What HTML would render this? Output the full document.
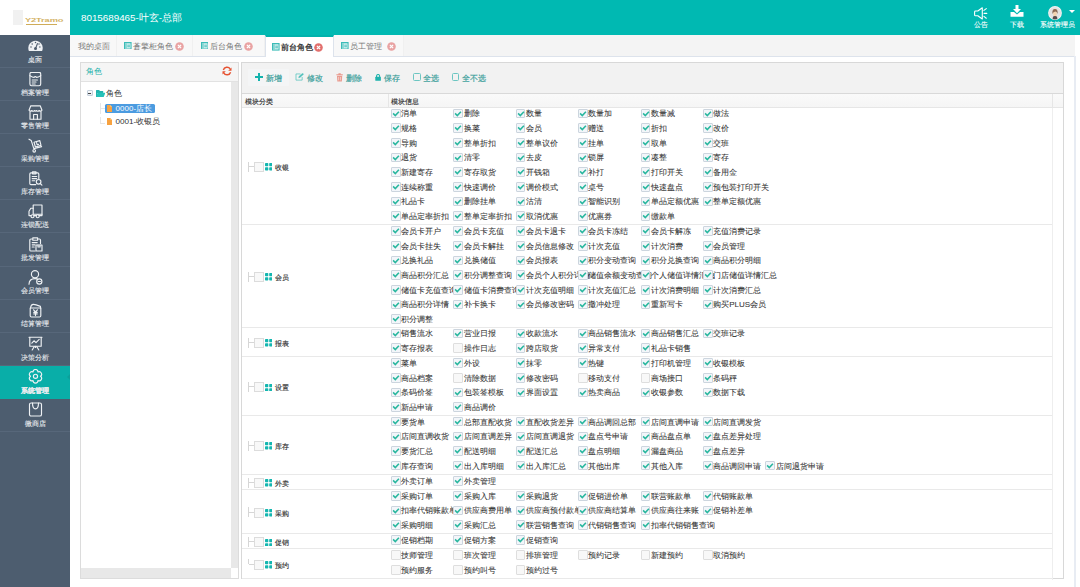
<!DOCTYPE html>
<html><head><meta charset="utf-8"><style>
*{margin:0;padding:0;box-sizing:border-box}
html,body{width:1080px;height:587px;overflow:hidden;background:#fff;font-family:"Liberation Sans",sans-serif;color:#333}
.abs{position:absolute}
#logo{position:absolute;left:0;top:0;width:70px;height:35px;background:#fff}
#hdr{position:absolute;left:70px;top:0;width:1010px;height:35px;background:#00b9b2;color:#fff}
#hdr .ttl{position:absolute;left:11px;top:12.2px;font-size:9.8px;line-height:12px;white-space:nowrap}
.hi{position:absolute;top:0;text-align:center;font-size:7.3px;line-height:8px;color:#fff;white-space:nowrap;-webkit-text-stroke:.1px #fff}
#side{position:absolute;left:0;top:35px;width:70px;height:552px;background:#4d5d6f}
.si{position:absolute;left:0;width:70px;height:33.08px;border-bottom:1px solid #57677a;color:#e6e9ed;text-align:center}
.si.act{background:#09aea8;color:#fff;border-bottom-color:#09aea8}
.si.act::after{content:"";position:absolute;right:0;top:8.5px;border:3.3px solid transparent;border-right:3.5px solid #0c9f9a;border-left:0}
.si .ic{position:absolute;left:0;top:3.5px;width:70px;height:15px;display:flex;justify-content:center}
.si .st{position:absolute;left:0;top:20.8px;width:70px;font-size:7.2px;line-height:8px;white-space:nowrap;-webkit-text-stroke:.12px #e6e9ed}
.si.act .st{font-weight:bold}
#tabs{position:absolute;left:70px;top:35px;width:1005px;height:22px;background:#f4f4f4;border-bottom:1px solid #dde3ec}
.tab{position:absolute;top:0;height:21px;background:#f8f8f8;border-right:1px solid #f0f0f0;font-size:7.7px;line-height:9px;color:#777;white-space:nowrap}
.tab span{position:absolute;top:6.5px}
.tab .ti{position:absolute;top:6.5px}
.tab .tc{position:absolute;top:6.6px}
.tab.act{background:#fff;border-top:2px solid #00b2ac;color:#333;-webkit-text-stroke:.3px #333;height:22px;border-left:1px solid #dde3ec;border-right:1px solid #dde3ec}
#frame{position:absolute;left:70px;top:56px;width:1006px;height:540px;border-right:2px solid #e8ecf3}
#lp{position:absolute;left:80px;top:62px;width:158.5px;height:516.5px;border:1px solid #dcdcdc;border-left-width:1.5px;background:#fff}
#lp .ph{position:absolute;left:0;top:0;width:100%;height:19px;background:#f5f5f5;border-bottom:1px solid #e2e2e2}
#lp .pt{position:absolute;left:5.3px;top:4.3px;font-size:7.6px;line-height:9px;color:#1ab0aa}
#rg{position:absolute;left:240.7px;top:62.3px;width:822.9px;height:517.1px;border:1px solid #d8d8d8;background:#fff}
#tb{position:absolute;left:0;top:0;width:100%;height:30.6px;background:#f2f2f2;border-bottom:1px solid #d9d9d9}
.btn{position:absolute;top:10.5px;font-size:7.9px;line-height:9px;color:#3c9f9b;white-space:nowrap;-webkit-text-stroke:.2px #3c9f9b}
#gh{position:absolute;left:0;top:30.6px;width:100%;height:13.8px;background:linear-gradient(#fafafa,#f5f5f5);border-bottom:1px solid #e6e6e6;font-size:7.2px;line-height:9px;color:#333;-webkit-text-stroke:.15px #333}
#gh span{position:absolute;top:3.4px}
.vline{position:absolute;width:1px;background:#ececec}
.grow{position:absolute;left:0;width:810.7px;border-bottom:1px solid #e9e9e9}
.it{position:absolute;height:11px;white-space:nowrap;font-size:8px;line-height:10px;color:#333}
.it span{position:absolute;left:10.2px;top:.7px;-webkit-text-stroke:.06px #333}
.cb,.cb.un{position:absolute;left:0;top:0;width:9.5px;height:9.6px;border:1px solid #ccd5de;background:#f3f6fa;z-index:2;border-radius:1px}
.cb.un{border-color:#dedede;background:#f8f8f8}
.cb svg{position:absolute;left:-1px;top:-1px}
.gl{position:absolute;left:0;height:11px;width:140px}
.gl .tl{position:absolute;left:6.4px;top:-.5px;width:6px;height:10px;border-left:1px solid #d6d6d6}
.gl .tl.last{height:5px}
.gl .tl::after{content:"";position:absolute;left:0;top:4.5px;width:6px;border-top:1px solid #d6d6d6}
.gl .gcb{position:absolute;left:12.6px;top:0;width:9.8px;height:9.8px;border:1px solid #dcdcdc;background:#f8f8f8}
.gl .gi{position:absolute;left:23px;top:1.3px;width:7.5px;height:7.5px}
.gl .gi u{position:absolute;width:3.3px;height:3.3px;background:#14b6b0;border-radius:.8px}
.gl .gi u:nth-child(1){left:0;top:0}.gl .gi u:nth-child(2){left:4.1px;top:0}.gl .gi u:nth-child(3){left:0;top:4.1px}.gl .gi u:nth-child(4){left:4.1px;top:4.1px}
.gl span{position:absolute;left:33px;top:.8px;font-size:7.2px;line-height:9px;color:#333;-webkit-text-stroke:.15px #333}
</style></head><body>
<div id="logo"><div class="abs" style="left:13px;top:10.4px;width:10px;height:14.6px;background:#f1f1f1"></div>
<div class="abs" style="left:25.3px;top:17.3px;font-size:7.6px;line-height:7px;color:#d3b163;font-weight:bold;letter-spacing:-.1px;transform:scale(1.22,.78);transform-origin:0 50%">Y2Tramo</div>
<div class="abs" style="left:26px;top:24px;width:31px;height:1.4px;background:#cfac58"></div></div>
<div id="hdr"><div class="ttl">8015689465-叶玄-总部</div>
<div class="hi" style="left:897px;width:28px"><svg width="14" height="13" viewBox="0 0 14 13" style="position:absolute;left:7px;top:7px;overflow:visible" fill="none" stroke="#fff" stroke-width="1.1" stroke-linecap="round"><path d="M1.5 4 H3.8 L8.3 0.8 V12 L3.8 8.8 H1.5 Q0.6 8.8 0.6 7.9 V4.9 Q0.6 4 1.5 4Z" stroke-linejoin="round"/><path d="M9.9 3.4 L12.3 1.6 M10.1 6.4 H12.8 M9.9 9.4 L12.3 11.2"/></svg><div style="position:absolute;left:0;top:20.5px;width:28px">公告</div></div>
<div class="hi" style="left:932px;width:30px"><svg width="14" height="12" viewBox="0 0 14 12" style="position:absolute;left:8px;top:5px"><path d="M5.5 0 H8.5 V4 H11 L7 8.2 L3 4 H5.5 Z" fill="#fff"/><path d="M0.5 7 H4 L7 9.5 L10 7 H13.5 V11.7 H0.5 Z" fill="#fff"/></svg><div style="position:absolute;left:0;top:20.5px;width:30px">下载</div></div>
<div class="hi" style="left:968px;width:38px"><svg width="14" height="14" viewBox="0 0 14 14" style="position:absolute;left:9.9px;top:6px"><circle cx="7" cy="7" r="6.9" fill="#f4f4f4"/><circle cx="7" cy="7" r="6" fill="#e4e2e2"/><path d="M4.6 13 Q4.8 9.8 7 9.8 Q9.2 9.8 9.4 13 Q7 13.8 4.6 13Z" fill="#5a4a4a"/><ellipse cx="7" cy="7.9" rx="1.9" ry="2.4" fill="#f3d2ae"/><path d="M4.4 8 Q3.9 3 7 3.1 Q10.1 3 9.6 8 Q9 5.6 7.4 5.5 Q5.2 5.6 4.4 8Z" fill="#8d6a52"/></svg>
<svg width="6" height="4" viewBox="0 0 6 4" style="position:absolute;left:31px;top:10.3px"><path d="M0 0 H6 L3 3Z" fill="#fff"/></svg><div style="position:absolute;left:0;top:20.5px;width:38px">系统管理员</div></div>
</div>
<div id="side">
<div class="si" style="top:0px"><div class="ic"><svg width="15" height="11" viewBox="0 0 15 11" style="margin-top:1.3px"><path d="M0.9 10.9 A7.2 7.2 0 1 1 14.1 10.9 Z" fill="#eef1f4"/><circle cx="7.5" cy="8.6" r="1.5" fill="#4c5b6c"/><path d="M7.5 8.6 L9.6 3.2" stroke="#4c5b6c" stroke-width="1.1"/><circle cx="3" cy="7" r=".75" fill="#4c5b6c"/><circle cx="4.2" cy="4" r=".75" fill="#4c5b6c"/><circle cx="7.5" cy="2.4" r=".75" fill="#4c5b6c"/><circle cx="11.9" cy="7" r=".75" fill="#4c5b6c"/><circle cx="11" cy="4" r=".75" fill="#4c5b6c"/></svg></div><div class="st">桌面</div></div>
<div class="si" style="top:33.08px"><div class="ic"><svg width="15" height="15" viewBox="0 0 15 15" fill="none" stroke="#eef1f4" stroke-width="1.15" stroke-linejoin="round" stroke-linecap="round"><rect x="1.9" y="0.3" width="10.8" height="13.4" rx="1.6"/><path d="M1.9 3.6 Q4.5 5.4 6 5.4 Q7.3 3.9 8.6 5.4 Q10.1 5.4 12.7 3.6"/><path d="M4.2 8h5.2M4.2 10h3.8M4.2 12h3"/></svg></div><div class="st">档案管理</div></div>
<div class="si" style="top:66.16px"><div class="ic"><svg width="15" height="15" viewBox="0 0 15 15" fill="none" stroke="#eef1f4" stroke-width="1.15" stroke-linejoin="round" stroke-linecap="round"><path d="M1 5.2 L2.8 0.8 H12.2 L14 5.2 Q12.7 7 11.2 5.5 Q9.8 7 8.3 5.5 Q7.5 7 6.7 5.5 Q5.2 7 3.8 5.5 Q2.3 7 1 5.2Z"/><path d="M2 6.5 V14.2 H13 V6.5"/><path d="M5.6 14.2 V9.5 H9.4 V14.2"/></svg></div><div class="st">零售管理</div></div>
<div class="si" style="top:99.24px"><div class="ic"><svg width="15" height="15" viewBox="0 0 15 15" fill="none" stroke="#eef1f4" stroke-width="1.15" stroke-linejoin="round" stroke-linecap="round"><path d="M1 1.2 L3.2 2.4 L5.8 10.6 L13.6 8.6"/><path d="M6 4.2 L11.8 2.6 L13 7.4 L7.4 9 Z"/><path d="M8.6 4.6 L9.2 6.8 L10.6 6.4"/><circle cx="6.2" cy="12.8" r="1.3"/></svg></div><div class="st">采购管理</div></div>
<div class="si" style="top:132.32px"><div class="ic"><svg width="15" height="15" viewBox="0 0 15 15" fill="none" stroke="#eef1f4" stroke-width="1.15" stroke-linejoin="round" stroke-linecap="round"><path d="M10.8 7.5 V3 Q10.8 1.8 9.6 1.8 H3 Q1.8 1.8 1.8 3 V12.4 Q1.8 13.6 3 13.6 H7.8"/><path d="M4.5 0.8 H8 V2.8 H4.5Z"/><path d="M4.2 5.5h4.5M4.2 7.6h4.5M4.2 9.7h2.5"/><circle cx="10.6" cy="10.8" r="2.3"/><path d="M12.3 12.5 L13.9 14.1"/></svg></div><div class="st">库存管理</div></div>
<div class="si" style="top:165.4px"><div class="ic"><svg width="15" height="15" viewBox="0 0 15 15" fill="none" stroke="#eef1f4" stroke-width="1.15" stroke-linejoin="round" stroke-linecap="round"><path d="M5.2 1 H14 V10.2 H5.2 Z"/><path d="M5.2 4.2 H2.8 L1 7.2 V11.6 H3"/><path d="M6 11.6 H8.3 M11.1 11.6 H14 V10.2"/><circle cx="4.5" cy="12.2" r="1.5"/><circle cx="9.7" cy="12.2" r="1.5"/></svg></div><div class="st">连锁配送</div></div>
<div class="si" style="top:198.48px"><div class="ic"><svg width="15" height="15" viewBox="0 0 15 15" fill="none" stroke="#eef1f4" stroke-width="1.15" stroke-linejoin="round" stroke-linecap="round"><path d="M4.2 2 H2.9 Q1.8 2 1.8 3.1 V12.9 Q1.8 14 2.9 14 H7"/><path d="M10.2 2 H11.4 Q12.5 2 12.5 3.1 V6.5"/><path d="M4.8 0.8 H9.6 V3.2 H4.8Z"/><path d="M4.2 5.6h5M4.2 7.8h2.8M4.2 10h2"/><rect x="8" y="8" width="6" height="6"/><path d="M10 8 V10 H12 V8"/></svg></div><div class="st">批发管理</div></div>
<div class="si" style="top:231.56px"><div class="ic"><svg width="15" height="15" viewBox="0 0 15 15" fill="none" stroke="#eef1f4" stroke-width="1.15" stroke-linejoin="round" stroke-linecap="round"><circle cx="7" cy="4.2" r="3.6"/><path d="M1 14.2 Q1.2 8.6 7 8.6 Q8.4 8.6 9.2 8.9"/><circle cx="11.3" cy="11.5" r="2.6"/><path d="M10.2 11.5h2.2"/></svg></div><div class="st">会员管理</div></div>
<div class="si" style="top:264.64px"><div class="ic"><svg width="15" height="15" viewBox="0 0 15 15" fill="none" stroke="#eef1f4" stroke-width="1.15" stroke-linejoin="round" stroke-linecap="round"><path d="M2.2 5 H12.8 V12.8 Q12.8 14 11.6 14 H3.4 Q2.2 14 2.2 12.8 Z"/><path d="M2.6 4.8 Q3 1.2 5.5 1.4 Q7.5 1.6 12.4 3.4 L12.6 5"/><path d="M5.6 6.8 L7.5 9 L9.4 6.8 M5.8 9.4 H9.2 M5.8 10.9 H9.2 M7.5 9 V12.6"/></svg></div><div class="st">结算管理</div></div>
<div class="si" style="top:297.72px"><div class="ic"><svg width="15" height="15" viewBox="0 0 15 15" fill="none" stroke="#eef1f4" stroke-width="1.15" stroke-linejoin="round" stroke-linecap="round"><path d="M1 1.2 H14 M1.8 1.2 V10.2 H13.2 V1.2"/><path d="M3.8 7.2 L6 4.8 L8 6.6 L11.2 3.4"/><path d="M7.5 10.2 V11.5 M4.2 14 L6.2 10.6 M10.8 14 L8.8 10.6"/></svg></div><div class="st">决策分析</div></div>
<div class="si act" style="top:330.8px"><div class="ic"><svg width="15" height="15" viewBox="0 0 15 15" fill="none" stroke="#eef1f4" stroke-width="1.15" stroke-linejoin="round" stroke-linecap="round"><path d="M5.00 2.98 A2.50 2.50 0 0 1 10.00 2.98 A2.50 2.50 0 0 1 12.49 7.30 A2.50 2.50 0 0 1 10.00 11.62 A2.50 2.50 0 0 1 5.00 11.62 A2.50 2.50 0 0 1 2.51 7.30 A2.50 2.50 0 0 1 5.00 2.98 Z"/><circle cx="7.5" cy="7.3" r="2.1"/></svg></div><div class="st">系统管理</div></div>
<div class="si" style="top:363.88px"><div class="ic"><svg width="15" height="15" viewBox="0 0 15 15" fill="none" stroke="#eef1f4" stroke-width="1.15" stroke-linejoin="round" stroke-linecap="round"><rect x="1.5" y="1" width="12" height="13" rx="1.6"/><path d="M4.5 1 Q4.5 6.8 7.5 6.8 Q10.5 6.8 10.5 1"/></svg></div><div class="st">微商店</div></div>
</div>
<div id="tabs">
<div class="tab" style="left:0;width:46.7px"><span style="left:8.3px">我的桌面</span></div>
<div class="tab" style="left:46.7px;width:76.6px"><svg class="ti" style="left:7.3px" width="7.6" height="7.6" viewBox="0 0 7 7"><rect x="0" y="0" width="7" height="7" fill="#3cbcb8"/><rect x="1" y="1.2" width="5" height="4.8" fill="#dff4f3"/><rect x="1" y="1.2" width="1.6" height="4.8" fill="#7dd3d0"/><rect x="3" y="2.5" width="2.5" height=".8" fill="#3cbcb8"/><rect x="3" y="4" width="2.5" height=".8" fill="#3cbcb8"/></svg><span style="left:16.5px">蒼擎柜角色</span><svg class="tc" style="left:58.8px" width="9" height="9" viewBox="0 0 9 9"><circle cx="4.5" cy="4.5" r="4.3" fill="#e9a3a3"/><path d="M2.9 2.9 L6.1 6.1 M6.1 2.9 L2.9 6.1" stroke="#fff" stroke-width="1.3"/></svg></div>
<div class="tab" style="left:123.3px;width:71.4px"><svg class="ti" style="left:7.3px" width="7.6" height="7.6" viewBox="0 0 7 7"><rect x="0" y="0" width="7" height="7" fill="#3cbcb8"/><rect x="1" y="1.2" width="5" height="4.8" fill="#dff4f3"/><rect x="1" y="1.2" width="1.6" height="4.8" fill="#7dd3d0"/><rect x="3" y="2.5" width="2.5" height=".8" fill="#3cbcb8"/><rect x="3" y="4" width="2.5" height=".8" fill="#3cbcb8"/></svg><span style="left:16.5px">后台角色</span><svg class="tc" style="left:51px" width="9" height="9" viewBox="0 0 9 9"><circle cx="4.5" cy="4.5" r="4.3" fill="#e9a3a3"/><path d="M2.9 2.9 L6.1 6.1 M6.1 2.9 L2.9 6.1" stroke="#fff" stroke-width="1.3"/></svg></div>
<div class="tab act" style="left:194.7px;width:69.5px"><svg class="ti" style="left:6.8px;top:6.2px" width="7.6" height="7.6" viewBox="0 0 7 7"><rect width="7" height="7" fill="#3cbcb8"/><rect x="1" y="1.2" width="5" height="4.8" fill="#dff4f3"/><rect x="1" y="1.2" width="1.6" height="4.8" fill="#7dd3d0"/><rect x="3" y="2.5" width="2.5" height=".8" fill="#3cbcb8"/><rect x="3" y="4" width="2.5" height=".8" fill="#3cbcb8"/></svg><span style="left:15.7px;top:6px">前台角色</span><svg class="tc" style="left:48.3px;top:5.8px" width="9" height="9" viewBox="0 0 9 9"><circle cx="4.5" cy="4.5" r="4.3" fill="#e2706e"/><path d="M2.9 2.9 L6.1 6.1 M6.1 2.9 L2.9 6.1" stroke="#fff" stroke-width="1.3"/></svg></div>
<div class="tab" style="left:264.2px;width:69.8px"><svg class="ti" style="left:7px" width="7.6" height="7.6" viewBox="0 0 7 7"><rect x="0" y="0" width="7" height="7" fill="#3cbcb8"/><rect x="1" y="1.2" width="5" height="4.8" fill="#dff4f3"/><rect x="1" y="1.2" width="1.6" height="4.8" fill="#7dd3d0"/><rect x="3" y="2.5" width="2.5" height=".8" fill="#3cbcb8"/><rect x="3" y="4" width="2.5" height=".8" fill="#3cbcb8"/></svg><span style="left:16px">员工管理</span><svg class="tc" style="left:52.5px" width="9" height="9" viewBox="0 0 9 9"><circle cx="4.5" cy="4.5" r="4.3" fill="#e9a3a3"/><path d="M2.9 2.9 L6.1 6.1 M6.1 2.9 L2.9 6.1" stroke="#fff" stroke-width="1.3"/></svg></div>
</div>
<div id="frame"></div>
<div id="lp"><div class="ph"><div class="pt">角色</div>
<svg class="abs" style="left:140.8px;top:3px" width="10" height="10" viewBox="0 0 10 10" fill="none" stroke="#e65332" stroke-width="1.45"><path d="M1.35 3.95 A3.8 3.8 0 0 1 8.19 2.93"/><path d="M8.61 6.17 A3.8 3.8 0 0 1 1.71 6.9"/><path d="M9.5 1.5 V4.8 H6.2Z" fill="#e65332" stroke="none"/><path d="M0.5 8.6 V5.3 H3.8Z" fill="#e65332" stroke="none"/></svg></div>
<div class="abs" style="left:5.6px;top:27.3px;width:6.4px;height:5.8px;border:1px solid #c3cfdb;border-radius:1px;background:linear-gradient(#fbfcfd,#e6ebf0)"></div><div class="abs" style="left:7.1px;top:29.7px;width:3.4px;height:1px;background:#444"></div>
<svg class="abs" style="left:14.5px;top:27.3px" width="9.5" height="7.2" viewBox="0 0 9.5 7.2"><path d="M0 .6 Q0 0 .6 0 H3.2 L3.9 .9 H7.2 V3 H0Z" fill="#22b3ad"/><path d="M0 .8 H1.4 V7.2 H0Z" fill="#22b3ad"/><path d="M1.6 2.7 H9.5 L7.6 7.2 H0 Z" fill="#25c1b8"/></svg>
<div class="abs" style="left:24.8px;top:26px;font-size:8px;line-height:9px">角色</div>
<div class="abs" style="left:18.8px;top:39.5px;width:5px;height:11px;border-left:1px solid #e6e6e6"></div>
<div class="abs" style="left:18.8px;top:44.7px;width:5.5px;border-top:1px solid #e6e6e6"></div>
<div class="abs" style="left:18.8px;top:54.3px;width:5px;height:6px;border-left:1px solid #e6e6e6"></div>
<div class="abs" style="left:18.8px;top:59.5px;width:5.5px;border-top:1px solid #e6e6e6"></div>
<div class="abs" style="left:24.2px;top:40.5px;width:50.3px;height:9.3px;background:#4b9be0;border-radius:1.5px"></div>
<svg class="abs" style="left:26.3px;top:41.6px" width="5" height="7" viewBox="0 0 5 7"><path d="M0 0 H3.3 L5 1.7 V7 H0Z" fill="#f7a240"/><path d="M3.3 0 V1.7 H5" fill="#fbd29a"/></svg>
<div class="abs" style="left:34.6px;top:41px;font-size:7.9px;line-height:9px;color:#fff;letter-spacing:.1px">0000-店长</div>
<svg class="abs" style="left:26.3px;top:54.6px" width="5" height="7" viewBox="0 0 5 7"><path d="M0 0 H3.3 L5 1.7 V7 H0Z" fill="#f7a240"/><path d="M3.3 0 V1.7 H5" fill="#fbd29a"/></svg>
<div class="abs" style="left:34.6px;top:54px;font-size:8.1px;line-height:9px">0001-收银员</div>
<div class="abs" style="left:150.1px;top:19px;width:7px;height:486.3px;background:#e8e8e8"></div>
<div class="abs" style="left:0;top:505.3px;width:150.1px;height:9.5px;background:#e8e8e8"></div>
</div>
<div id="rg">
<div id="tb">
<div class="abs" style="left:6px;top:5.4px;width:41.3px;height:17.6px;background:#f4f5f6;border-radius:1px"></div>
<svg class="abs" style="left:13px;top:10.1px" width="8" height="8" viewBox="0 0 8 8"><path d="M3 0H5V3H8V5H5V8H3V5H0V3H3Z" fill="#13b3ad"/></svg>
<div class="btn" style="left:24.5px">新增</div>
<svg class="abs" style="left:53.4px;top:10.2px" width="9" height="7.6" viewBox="0 0 9 8" fill="none" stroke="#4cc0ba" stroke-width=".75"><path d="M5.5 1 H.8 V7.5 H7.3 V4.2"/><path d="M3.6 5 L3.9 3.6 L7.8 .2 L8.8 1.2 L5 4.7 Z" fill="#4cc0ba" stroke-width=".4"/></svg>
<div class="btn" style="left:65px">修改</div>
<svg class="abs" style="left:94.3px;top:9.8px" width="7.2" height="8.8" viewBox="0 0 7 9"><path d="M2.3 0.3 H4.7 V1.2 H6.8 V2.3 H.2 V1.2 H2.3Z" fill="#e99a8e"/><path d="M.8 2.8 H6.2 L5.8 8.8 H1.2Z" fill="#e99a8e"/><path d="M2.5 4 V7.5 M4.5 4 V7.5" stroke="#fff" stroke-width=".5"/></svg>
<div class="btn" style="left:104px">删除</div>
<svg class="abs" style="left:133.6px;top:10.8px" width="6.2" height="6.8" viewBox="0 0 7 8"><path d="M1.7 3.6 V2.4 A1.8 1.8 0 0 1 5.3 2.4 V3.6" fill="none" stroke="#1fb3ad" stroke-width="1.3"/><rect x=".2" y="3.3" width="6.6" height="4.7" rx=".6" fill="#1fb3ad"/></svg>
<div class="btn" style="left:142.5px">保存</div>
<div class="abs" style="left:171.7px;top:10.2px;width:7.3px;height:7.5px;border:1px solid #6cc6c2;border-radius:1.5px"></div>
<div class="btn" style="left:181px">全选</div>
<div class="abs" style="left:210px;top:10.2px;width:7.3px;height:7.5px;border:1px solid #6cc6c2;border-radius:1.5px"></div>
<div class="btn" style="left:220px">全不选</div>
</div>
<div id="gh"><span style="left:3px">模块分类</span><span style="left:149.7px">模块信息</span>
<div class="vline" style="left:146.7px;top:0;height:14px;background:#e6e6e6"></div>
<div class="vline" style="left:810.7px;top:0;height:14px;background:#e6e6e6"></div></div>
<div class="vline" style="left:810.7px;top:44.4px;height:472px;background:#eeeeee"></div>
<div class="grow" style="top:44.4px;height:117.6px"><div class="gl" style="top:54.5px"><b class="tl"></b><i class="gcb"></i><svg class="gi" width="7.5" height="7.5" viewBox="0 0 7.5 7.5"><rect x="0" y="0" width="3.3" height="3.3" rx=".7" fill="#14b6b0"/><rect x="4.2" y="0" width="3.3" height="3.3" rx=".7" fill="#14b6b0"/><rect x="0" y="4.2" width="3.3" height="3.3" rx=".7" fill="#14b6b0"/><rect x="4.2" y="4.2" width="3.3" height="3.3" rx=".7" fill="#14b6b0"/></svg><span>收银</span></div><div class="it" style="left:149.4px;top:1.1px"><span>消单</span><i class="cb"><svg width="9.5" height="9.6" viewBox="0 0 9.5 9.6"><path d="M2.1 4.4 L4.3 6.6 L7.9 2.7" fill="none" stroke="#2ab79f" stroke-width="1.55"/></svg></i></div><div class="it" style="left:211.8px;top:1.1px"><span>删除</span><i class="cb"><svg width="9.5" height="9.6" viewBox="0 0 9.5 9.6"><path d="M2.1 4.4 L4.3 6.6 L7.9 2.7" fill="none" stroke="#2ab79f" stroke-width="1.55"/></svg></i></div><div class="it" style="left:274.2px;top:1.1px"><span>数量</span><i class="cb"><svg width="9.5" height="9.6" viewBox="0 0 9.5 9.6"><path d="M2.1 4.4 L4.3 6.6 L7.9 2.7" fill="none" stroke="#2ab79f" stroke-width="1.55"/></svg></i></div><div class="it" style="left:336.6px;top:1.1px"><span>数量加</span><i class="cb"><svg width="9.5" height="9.6" viewBox="0 0 9.5 9.6"><path d="M2.1 4.4 L4.3 6.6 L7.9 2.7" fill="none" stroke="#2ab79f" stroke-width="1.55"/></svg></i></div><div class="it" style="left:399px;top:1.1px"><span>数量减</span><i class="cb"><svg width="9.5" height="9.6" viewBox="0 0 9.5 9.6"><path d="M2.1 4.4 L4.3 6.6 L7.9 2.7" fill="none" stroke="#2ab79f" stroke-width="1.55"/></svg></i></div><div class="it" style="left:461.4px;top:1.1px"><span>做法</span><i class="cb"><svg width="9.5" height="9.6" viewBox="0 0 9.5 9.6"><path d="M2.1 4.4 L4.3 6.6 L7.9 2.7" fill="none" stroke="#2ab79f" stroke-width="1.55"/></svg></i></div><div class="it" style="left:149.4px;top:15.76px"><span>规格</span><i class="cb"><svg width="9.5" height="9.6" viewBox="0 0 9.5 9.6"><path d="M2.1 4.4 L4.3 6.6 L7.9 2.7" fill="none" stroke="#2ab79f" stroke-width="1.55"/></svg></i></div><div class="it" style="left:211.8px;top:15.76px"><span>换菜</span><i class="cb"><svg width="9.5" height="9.6" viewBox="0 0 9.5 9.6"><path d="M2.1 4.4 L4.3 6.6 L7.9 2.7" fill="none" stroke="#2ab79f" stroke-width="1.55"/></svg></i></div><div class="it" style="left:274.2px;top:15.76px"><span>会员</span><i class="cb"><svg width="9.5" height="9.6" viewBox="0 0 9.5 9.6"><path d="M2.1 4.4 L4.3 6.6 L7.9 2.7" fill="none" stroke="#2ab79f" stroke-width="1.55"/></svg></i></div><div class="it" style="left:336.6px;top:15.76px"><span>赠送</span><i class="cb"><svg width="9.5" height="9.6" viewBox="0 0 9.5 9.6"><path d="M2.1 4.4 L4.3 6.6 L7.9 2.7" fill="none" stroke="#2ab79f" stroke-width="1.55"/></svg></i></div><div class="it" style="left:399px;top:15.76px"><span>折扣</span><i class="cb"><svg width="9.5" height="9.6" viewBox="0 0 9.5 9.6"><path d="M2.1 4.4 L4.3 6.6 L7.9 2.7" fill="none" stroke="#2ab79f" stroke-width="1.55"/></svg></i></div><div class="it" style="left:461.4px;top:15.76px"><span>改价</span><i class="cb"><svg width="9.5" height="9.6" viewBox="0 0 9.5 9.6"><path d="M2.1 4.4 L4.3 6.6 L7.9 2.7" fill="none" stroke="#2ab79f" stroke-width="1.55"/></svg></i></div><div class="it" style="left:149.4px;top:30.42px"><span>导购</span><i class="cb"><svg width="9.5" height="9.6" viewBox="0 0 9.5 9.6"><path d="M2.1 4.4 L4.3 6.6 L7.9 2.7" fill="none" stroke="#2ab79f" stroke-width="1.55"/></svg></i></div><div class="it" style="left:211.8px;top:30.42px"><span>整单折扣</span><i class="cb"><svg width="9.5" height="9.6" viewBox="0 0 9.5 9.6"><path d="M2.1 4.4 L4.3 6.6 L7.9 2.7" fill="none" stroke="#2ab79f" stroke-width="1.55"/></svg></i></div><div class="it" style="left:274.2px;top:30.42px"><span>整单议价</span><i class="cb"><svg width="9.5" height="9.6" viewBox="0 0 9.5 9.6"><path d="M2.1 4.4 L4.3 6.6 L7.9 2.7" fill="none" stroke="#2ab79f" stroke-width="1.55"/></svg></i></div><div class="it" style="left:336.6px;top:30.42px"><span>挂单</span><i class="cb"><svg width="9.5" height="9.6" viewBox="0 0 9.5 9.6"><path d="M2.1 4.4 L4.3 6.6 L7.9 2.7" fill="none" stroke="#2ab79f" stroke-width="1.55"/></svg></i></div><div class="it" style="left:399px;top:30.42px"><span>取单</span><i class="cb"><svg width="9.5" height="9.6" viewBox="0 0 9.5 9.6"><path d="M2.1 4.4 L4.3 6.6 L7.9 2.7" fill="none" stroke="#2ab79f" stroke-width="1.55"/></svg></i></div><div class="it" style="left:461.4px;top:30.42px"><span>交班</span><i class="cb"><svg width="9.5" height="9.6" viewBox="0 0 9.5 9.6"><path d="M2.1 4.4 L4.3 6.6 L7.9 2.7" fill="none" stroke="#2ab79f" stroke-width="1.55"/></svg></i></div><div class="it" style="left:149.4px;top:45.08px"><span>退货</span><i class="cb"><svg width="9.5" height="9.6" viewBox="0 0 9.5 9.6"><path d="M2.1 4.4 L4.3 6.6 L7.9 2.7" fill="none" stroke="#2ab79f" stroke-width="1.55"/></svg></i></div><div class="it" style="left:211.8px;top:45.08px"><span>清零</span><i class="cb"><svg width="9.5" height="9.6" viewBox="0 0 9.5 9.6"><path d="M2.1 4.4 L4.3 6.6 L7.9 2.7" fill="none" stroke="#2ab79f" stroke-width="1.55"/></svg></i></div><div class="it" style="left:274.2px;top:45.08px"><span>去皮</span><i class="cb"><svg width="9.5" height="9.6" viewBox="0 0 9.5 9.6"><path d="M2.1 4.4 L4.3 6.6 L7.9 2.7" fill="none" stroke="#2ab79f" stroke-width="1.55"/></svg></i></div><div class="it" style="left:336.6px;top:45.08px"><span>锁屏</span><i class="cb"><svg width="9.5" height="9.6" viewBox="0 0 9.5 9.6"><path d="M2.1 4.4 L4.3 6.6 L7.9 2.7" fill="none" stroke="#2ab79f" stroke-width="1.55"/></svg></i></div><div class="it" style="left:399px;top:45.08px"><span>凑整</span><i class="cb"><svg width="9.5" height="9.6" viewBox="0 0 9.5 9.6"><path d="M2.1 4.4 L4.3 6.6 L7.9 2.7" fill="none" stroke="#2ab79f" stroke-width="1.55"/></svg></i></div><div class="it" style="left:461.4px;top:45.08px"><span>寄存</span><i class="cb"><svg width="9.5" height="9.6" viewBox="0 0 9.5 9.6"><path d="M2.1 4.4 L4.3 6.6 L7.9 2.7" fill="none" stroke="#2ab79f" stroke-width="1.55"/></svg></i></div><div class="it" style="left:149.4px;top:59.74px"><span>新建寄存</span><i class="cb"><svg width="9.5" height="9.6" viewBox="0 0 9.5 9.6"><path d="M2.1 4.4 L4.3 6.6 L7.9 2.7" fill="none" stroke="#2ab79f" stroke-width="1.55"/></svg></i></div><div class="it" style="left:211.8px;top:59.74px"><span>寄存取货</span><i class="cb"><svg width="9.5" height="9.6" viewBox="0 0 9.5 9.6"><path d="M2.1 4.4 L4.3 6.6 L7.9 2.7" fill="none" stroke="#2ab79f" stroke-width="1.55"/></svg></i></div><div class="it" style="left:274.2px;top:59.74px"><span>开钱箱</span><i class="cb"><svg width="9.5" height="9.6" viewBox="0 0 9.5 9.6"><path d="M2.1 4.4 L4.3 6.6 L7.9 2.7" fill="none" stroke="#2ab79f" stroke-width="1.55"/></svg></i></div><div class="it" style="left:336.6px;top:59.74px"><span>补打</span><i class="cb"><svg width="9.5" height="9.6" viewBox="0 0 9.5 9.6"><path d="M2.1 4.4 L4.3 6.6 L7.9 2.7" fill="none" stroke="#2ab79f" stroke-width="1.55"/></svg></i></div><div class="it" style="left:399px;top:59.74px"><span>打印开关</span><i class="cb"><svg width="9.5" height="9.6" viewBox="0 0 9.5 9.6"><path d="M2.1 4.4 L4.3 6.6 L7.9 2.7" fill="none" stroke="#2ab79f" stroke-width="1.55"/></svg></i></div><div class="it" style="left:461.4px;top:59.74px"><span>备用金</span><i class="cb"><svg width="9.5" height="9.6" viewBox="0 0 9.5 9.6"><path d="M2.1 4.4 L4.3 6.6 L7.9 2.7" fill="none" stroke="#2ab79f" stroke-width="1.55"/></svg></i></div><div class="it" style="left:149.4px;top:74.4px"><span>连续称重</span><i class="cb"><svg width="9.5" height="9.6" viewBox="0 0 9.5 9.6"><path d="M2.1 4.4 L4.3 6.6 L7.9 2.7" fill="none" stroke="#2ab79f" stroke-width="1.55"/></svg></i></div><div class="it" style="left:211.8px;top:74.4px"><span>快速调价</span><i class="cb"><svg width="9.5" height="9.6" viewBox="0 0 9.5 9.6"><path d="M2.1 4.4 L4.3 6.6 L7.9 2.7" fill="none" stroke="#2ab79f" stroke-width="1.55"/></svg></i></div><div class="it" style="left:274.2px;top:74.4px"><span>调价模式</span><i class="cb"><svg width="9.5" height="9.6" viewBox="0 0 9.5 9.6"><path d="M2.1 4.4 L4.3 6.6 L7.9 2.7" fill="none" stroke="#2ab79f" stroke-width="1.55"/></svg></i></div><div class="it" style="left:336.6px;top:74.4px"><span>桌号</span><i class="cb"><svg width="9.5" height="9.6" viewBox="0 0 9.5 9.6"><path d="M2.1 4.4 L4.3 6.6 L7.9 2.7" fill="none" stroke="#2ab79f" stroke-width="1.55"/></svg></i></div><div class="it" style="left:399px;top:74.4px"><span>快速盘点</span><i class="cb"><svg width="9.5" height="9.6" viewBox="0 0 9.5 9.6"><path d="M2.1 4.4 L4.3 6.6 L7.9 2.7" fill="none" stroke="#2ab79f" stroke-width="1.55"/></svg></i></div><div class="it" style="left:461.4px;top:74.4px"><span>预包装打印开关</span><i class="cb"><svg width="9.5" height="9.6" viewBox="0 0 9.5 9.6"><path d="M2.1 4.4 L4.3 6.6 L7.9 2.7" fill="none" stroke="#2ab79f" stroke-width="1.55"/></svg></i></div><div class="it" style="left:149.4px;top:89.06px"><span>礼品卡</span><i class="cb"><svg width="9.5" height="9.6" viewBox="0 0 9.5 9.6"><path d="M2.1 4.4 L4.3 6.6 L7.9 2.7" fill="none" stroke="#2ab79f" stroke-width="1.55"/></svg></i></div><div class="it" style="left:211.8px;top:89.06px"><span>删除挂单</span><i class="cb"><svg width="9.5" height="9.6" viewBox="0 0 9.5 9.6"><path d="M2.1 4.4 L4.3 6.6 L7.9 2.7" fill="none" stroke="#2ab79f" stroke-width="1.55"/></svg></i></div><div class="it" style="left:274.2px;top:89.06px"><span>沽清</span><i class="cb"><svg width="9.5" height="9.6" viewBox="0 0 9.5 9.6"><path d="M2.1 4.4 L4.3 6.6 L7.9 2.7" fill="none" stroke="#2ab79f" stroke-width="1.55"/></svg></i></div><div class="it" style="left:336.6px;top:89.06px"><span>智能识别</span><i class="cb"><svg width="9.5" height="9.6" viewBox="0 0 9.5 9.6"><path d="M2.1 4.4 L4.3 6.6 L7.9 2.7" fill="none" stroke="#2ab79f" stroke-width="1.55"/></svg></i></div><div class="it" style="left:399px;top:89.06px"><span>单品定额优惠</span><i class="cb"><svg width="9.5" height="9.6" viewBox="0 0 9.5 9.6"><path d="M2.1 4.4 L4.3 6.6 L7.9 2.7" fill="none" stroke="#2ab79f" stroke-width="1.55"/></svg></i></div><div class="it" style="left:461.4px;top:89.06px"><span>整单定额优惠</span><i class="cb"><svg width="9.5" height="9.6" viewBox="0 0 9.5 9.6"><path d="M2.1 4.4 L4.3 6.6 L7.9 2.7" fill="none" stroke="#2ab79f" stroke-width="1.55"/></svg></i></div><div class="it" style="left:149.4px;top:103.72px"><span>单品定率折扣</span><i class="cb"><svg width="9.5" height="9.6" viewBox="0 0 9.5 9.6"><path d="M2.1 4.4 L4.3 6.6 L7.9 2.7" fill="none" stroke="#2ab79f" stroke-width="1.55"/></svg></i></div><div class="it" style="left:211.8px;top:103.72px"><span>整单定率折扣</span><i class="cb"><svg width="9.5" height="9.6" viewBox="0 0 9.5 9.6"><path d="M2.1 4.4 L4.3 6.6 L7.9 2.7" fill="none" stroke="#2ab79f" stroke-width="1.55"/></svg></i></div><div class="it" style="left:274.2px;top:103.72px"><span>取消优惠</span><i class="cb"><svg width="9.5" height="9.6" viewBox="0 0 9.5 9.6"><path d="M2.1 4.4 L4.3 6.6 L7.9 2.7" fill="none" stroke="#2ab79f" stroke-width="1.55"/></svg></i></div><div class="it" style="left:336.6px;top:103.72px"><span>优惠券</span><i class="cb"><svg width="9.5" height="9.6" viewBox="0 0 9.5 9.6"><path d="M2.1 4.4 L4.3 6.6 L7.9 2.7" fill="none" stroke="#2ab79f" stroke-width="1.55"/></svg></i></div><div class="it" style="left:399px;top:103.72px"><span>缴款单</span><i class="cb"><svg width="9.5" height="9.6" viewBox="0 0 9.5 9.6"><path d="M2.1 4.4 L4.3 6.6 L7.9 2.7" fill="none" stroke="#2ab79f" stroke-width="1.55"/></svg></i></div></div>
<div class="grow" style="top:162px;height:102.35px"><div class="gl" style="top:46.87px"><b class="tl"></b><i class="gcb"></i><svg class="gi" width="7.5" height="7.5" viewBox="0 0 7.5 7.5"><rect x="0" y="0" width="3.3" height="3.3" rx=".7" fill="#14b6b0"/><rect x="4.2" y="0" width="3.3" height="3.3" rx=".7" fill="#14b6b0"/><rect x="0" y="4.2" width="3.3" height="3.3" rx=".7" fill="#14b6b0"/><rect x="4.2" y="4.2" width="3.3" height="3.3" rx=".7" fill="#14b6b0"/></svg><span>会员</span></div><div class="it" style="left:149.4px;top:1.1px"><span>会员卡开户</span><i class="cb"><svg width="9.5" height="9.6" viewBox="0 0 9.5 9.6"><path d="M2.1 4.4 L4.3 6.6 L7.9 2.7" fill="none" stroke="#2ab79f" stroke-width="1.55"/></svg></i></div><div class="it" style="left:211.8px;top:1.1px"><span>会员卡充值</span><i class="cb"><svg width="9.5" height="9.6" viewBox="0 0 9.5 9.6"><path d="M2.1 4.4 L4.3 6.6 L7.9 2.7" fill="none" stroke="#2ab79f" stroke-width="1.55"/></svg></i></div><div class="it" style="left:274.2px;top:1.1px"><span>会员卡退卡</span><i class="cb"><svg width="9.5" height="9.6" viewBox="0 0 9.5 9.6"><path d="M2.1 4.4 L4.3 6.6 L7.9 2.7" fill="none" stroke="#2ab79f" stroke-width="1.55"/></svg></i></div><div class="it" style="left:336.6px;top:1.1px"><span>会员卡冻结</span><i class="cb"><svg width="9.5" height="9.6" viewBox="0 0 9.5 9.6"><path d="M2.1 4.4 L4.3 6.6 L7.9 2.7" fill="none" stroke="#2ab79f" stroke-width="1.55"/></svg></i></div><div class="it" style="left:399px;top:1.1px"><span>会员卡解冻</span><i class="cb"><svg width="9.5" height="9.6" viewBox="0 0 9.5 9.6"><path d="M2.1 4.4 L4.3 6.6 L7.9 2.7" fill="none" stroke="#2ab79f" stroke-width="1.55"/></svg></i></div><div class="it" style="left:461.4px;top:1.1px"><span>充值消费记录</span><i class="cb"><svg width="9.5" height="9.6" viewBox="0 0 9.5 9.6"><path d="M2.1 4.4 L4.3 6.6 L7.9 2.7" fill="none" stroke="#2ab79f" stroke-width="1.55"/></svg></i></div><div class="it" style="left:149.4px;top:15.76px"><span>会员卡挂失</span><i class="cb"><svg width="9.5" height="9.6" viewBox="0 0 9.5 9.6"><path d="M2.1 4.4 L4.3 6.6 L7.9 2.7" fill="none" stroke="#2ab79f" stroke-width="1.55"/></svg></i></div><div class="it" style="left:211.8px;top:15.76px"><span>会员卡解挂</span><i class="cb"><svg width="9.5" height="9.6" viewBox="0 0 9.5 9.6"><path d="M2.1 4.4 L4.3 6.6 L7.9 2.7" fill="none" stroke="#2ab79f" stroke-width="1.55"/></svg></i></div><div class="it" style="left:274.2px;top:15.76px"><span>会员信息修改</span><i class="cb"><svg width="9.5" height="9.6" viewBox="0 0 9.5 9.6"><path d="M2.1 4.4 L4.3 6.6 L7.9 2.7" fill="none" stroke="#2ab79f" stroke-width="1.55"/></svg></i></div><div class="it" style="left:336.6px;top:15.76px"><span>计次充值</span><i class="cb"><svg width="9.5" height="9.6" viewBox="0 0 9.5 9.6"><path d="M2.1 4.4 L4.3 6.6 L7.9 2.7" fill="none" stroke="#2ab79f" stroke-width="1.55"/></svg></i></div><div class="it" style="left:399px;top:15.76px"><span>计次消费</span><i class="cb"><svg width="9.5" height="9.6" viewBox="0 0 9.5 9.6"><path d="M2.1 4.4 L4.3 6.6 L7.9 2.7" fill="none" stroke="#2ab79f" stroke-width="1.55"/></svg></i></div><div class="it" style="left:461.4px;top:15.76px"><span>会员管理</span><i class="cb"><svg width="9.5" height="9.6" viewBox="0 0 9.5 9.6"><path d="M2.1 4.4 L4.3 6.6 L7.9 2.7" fill="none" stroke="#2ab79f" stroke-width="1.55"/></svg></i></div><div class="it" style="left:149.4px;top:30.42px"><span>兑换礼品</span><i class="cb"><svg width="9.5" height="9.6" viewBox="0 0 9.5 9.6"><path d="M2.1 4.4 L4.3 6.6 L7.9 2.7" fill="none" stroke="#2ab79f" stroke-width="1.55"/></svg></i></div><div class="it" style="left:211.8px;top:30.42px"><span>兑换储值</span><i class="cb"><svg width="9.5" height="9.6" viewBox="0 0 9.5 9.6"><path d="M2.1 4.4 L4.3 6.6 L7.9 2.7" fill="none" stroke="#2ab79f" stroke-width="1.55"/></svg></i></div><div class="it" style="left:274.2px;top:30.42px"><span>会员报表</span><i class="cb"><svg width="9.5" height="9.6" viewBox="0 0 9.5 9.6"><path d="M2.1 4.4 L4.3 6.6 L7.9 2.7" fill="none" stroke="#2ab79f" stroke-width="1.55"/></svg></i></div><div class="it" style="left:336.6px;top:30.42px"><span>积分变动查询</span><i class="cb"><svg width="9.5" height="9.6" viewBox="0 0 9.5 9.6"><path d="M2.1 4.4 L4.3 6.6 L7.9 2.7" fill="none" stroke="#2ab79f" stroke-width="1.55"/></svg></i></div><div class="it" style="left:399px;top:30.42px"><span>积分兑换查询</span><i class="cb"><svg width="9.5" height="9.6" viewBox="0 0 9.5 9.6"><path d="M2.1 4.4 L4.3 6.6 L7.9 2.7" fill="none" stroke="#2ab79f" stroke-width="1.55"/></svg></i></div><div class="it" style="left:461.4px;top:30.42px"><span>商品积分明细</span><i class="cb"><svg width="9.5" height="9.6" viewBox="0 0 9.5 9.6"><path d="M2.1 4.4 L4.3 6.6 L7.9 2.7" fill="none" stroke="#2ab79f" stroke-width="1.55"/></svg></i></div><div class="it" style="left:149.4px;top:45.08px"><span>商品积分汇总</span><i class="cb"><svg width="9.5" height="9.6" viewBox="0 0 9.5 9.6"><path d="M2.1 4.4 L4.3 6.6 L7.9 2.7" fill="none" stroke="#2ab79f" stroke-width="1.55"/></svg></i></div><div class="it" style="left:211.8px;top:45.08px"><span>积分调整查询</span><i class="cb"><svg width="9.5" height="9.6" viewBox="0 0 9.5 9.6"><path d="M2.1 4.4 L4.3 6.6 L7.9 2.7" fill="none" stroke="#2ab79f" stroke-width="1.55"/></svg></i></div><div class="it" style="left:274.2px;top:45.08px"><span>会员个人积分详情</span><i class="cb"><svg width="9.5" height="9.6" viewBox="0 0 9.5 9.6"><path d="M2.1 4.4 L4.3 6.6 L7.9 2.7" fill="none" stroke="#2ab79f" stroke-width="1.55"/></svg></i></div><div class="it" style="left:336.6px;top:45.08px"><span>储值余额变动查询</span><i class="cb"><svg width="9.5" height="9.6" viewBox="0 0 9.5 9.6"><path d="M2.1 4.4 L4.3 6.6 L7.9 2.7" fill="none" stroke="#2ab79f" stroke-width="1.55"/></svg></i></div><div class="it" style="left:399px;top:45.08px"><span>个人储值详情汇总</span><i class="cb"><svg width="9.5" height="9.6" viewBox="0 0 9.5 9.6"><path d="M2.1 4.4 L4.3 6.6 L7.9 2.7" fill="none" stroke="#2ab79f" stroke-width="1.55"/></svg></i></div><div class="it" style="left:461.4px;top:45.08px"><span>门店储值详情汇总</span><i class="cb"><svg width="9.5" height="9.6" viewBox="0 0 9.5 9.6"><path d="M2.1 4.4 L4.3 6.6 L7.9 2.7" fill="none" stroke="#2ab79f" stroke-width="1.55"/></svg></i></div><div class="it" style="left:149.4px;top:59.74px"><span>储值卡充值查询</span><i class="cb"><svg width="9.5" height="9.6" viewBox="0 0 9.5 9.6"><path d="M2.1 4.4 L4.3 6.6 L7.9 2.7" fill="none" stroke="#2ab79f" stroke-width="1.55"/></svg></i></div><div class="it" style="left:211.8px;top:59.74px"><span>储值卡消费查询</span><i class="cb"><svg width="9.5" height="9.6" viewBox="0 0 9.5 9.6"><path d="M2.1 4.4 L4.3 6.6 L7.9 2.7" fill="none" stroke="#2ab79f" stroke-width="1.55"/></svg></i></div><div class="it" style="left:274.2px;top:59.74px"><span>计次充值明细</span><i class="cb"><svg width="9.5" height="9.6" viewBox="0 0 9.5 9.6"><path d="M2.1 4.4 L4.3 6.6 L7.9 2.7" fill="none" stroke="#2ab79f" stroke-width="1.55"/></svg></i></div><div class="it" style="left:336.6px;top:59.74px"><span>计次充值汇总</span><i class="cb"><svg width="9.5" height="9.6" viewBox="0 0 9.5 9.6"><path d="M2.1 4.4 L4.3 6.6 L7.9 2.7" fill="none" stroke="#2ab79f" stroke-width="1.55"/></svg></i></div><div class="it" style="left:399px;top:59.74px"><span>计次消费明细</span><i class="cb"><svg width="9.5" height="9.6" viewBox="0 0 9.5 9.6"><path d="M2.1 4.4 L4.3 6.6 L7.9 2.7" fill="none" stroke="#2ab79f" stroke-width="1.55"/></svg></i></div><div class="it" style="left:461.4px;top:59.74px"><span>计次消费汇总</span><i class="cb"><svg width="9.5" height="9.6" viewBox="0 0 9.5 9.6"><path d="M2.1 4.4 L4.3 6.6 L7.9 2.7" fill="none" stroke="#2ab79f" stroke-width="1.55"/></svg></i></div><div class="it" style="left:149.4px;top:74.4px"><span>商品积分详情</span><i class="cb"><svg width="9.5" height="9.6" viewBox="0 0 9.5 9.6"><path d="M2.1 4.4 L4.3 6.6 L7.9 2.7" fill="none" stroke="#2ab79f" stroke-width="1.55"/></svg></i></div><div class="it" style="left:211.8px;top:74.4px"><span>补卡换卡</span><i class="cb"><svg width="9.5" height="9.6" viewBox="0 0 9.5 9.6"><path d="M2.1 4.4 L4.3 6.6 L7.9 2.7" fill="none" stroke="#2ab79f" stroke-width="1.55"/></svg></i></div><div class="it" style="left:274.2px;top:74.4px"><span>会员修改密码</span><i class="cb"><svg width="9.5" height="9.6" viewBox="0 0 9.5 9.6"><path d="M2.1 4.4 L4.3 6.6 L7.9 2.7" fill="none" stroke="#2ab79f" stroke-width="1.55"/></svg></i></div><div class="it" style="left:336.6px;top:74.4px"><span>撤冲处理</span><i class="cb"><svg width="9.5" height="9.6" viewBox="0 0 9.5 9.6"><path d="M2.1 4.4 L4.3 6.6 L7.9 2.7" fill="none" stroke="#2ab79f" stroke-width="1.55"/></svg></i></div><div class="it" style="left:399px;top:74.4px"><span>重新写卡</span><i class="cb"><svg width="9.5" height="9.6" viewBox="0 0 9.5 9.6"><path d="M2.1 4.4 L4.3 6.6 L7.9 2.7" fill="none" stroke="#2ab79f" stroke-width="1.55"/></svg></i></div><div class="it" style="left:461.4px;top:74.4px"><span>购买PLUS会员</span><i class="cb"><svg width="9.5" height="9.6" viewBox="0 0 9.5 9.6"><path d="M2.1 4.4 L4.3 6.6 L7.9 2.7" fill="none" stroke="#2ab79f" stroke-width="1.55"/></svg></i></div><div class="it" style="left:149.4px;top:89.06px"><span>积分调整</span><i class="cb"><svg width="9.5" height="9.6" viewBox="0 0 9.5 9.6"><path d="M2.1 4.4 L4.3 6.6 L7.9 2.7" fill="none" stroke="#2ab79f" stroke-width="1.55"/></svg></i></div></div>
<div class="grow" style="top:264.35px;height:29.65px"><div class="gl" style="top:10.53px"><b class="tl"></b><i class="gcb"></i><svg class="gi" width="7.5" height="7.5" viewBox="0 0 7.5 7.5"><rect x="0" y="0" width="3.3" height="3.3" rx=".7" fill="#14b6b0"/><rect x="4.2" y="0" width="3.3" height="3.3" rx=".7" fill="#14b6b0"/><rect x="0" y="4.2" width="3.3" height="3.3" rx=".7" fill="#14b6b0"/><rect x="4.2" y="4.2" width="3.3" height="3.3" rx=".7" fill="#14b6b0"/></svg><span>报表</span></div><div class="it" style="left:149.4px;top:1.1px"><span>销售流水</span><i class="cb"><svg width="9.5" height="9.6" viewBox="0 0 9.5 9.6"><path d="M2.1 4.4 L4.3 6.6 L7.9 2.7" fill="none" stroke="#2ab79f" stroke-width="1.55"/></svg></i></div><div class="it" style="left:211.8px;top:1.1px"><span>营业日报</span><i class="cb"><svg width="9.5" height="9.6" viewBox="0 0 9.5 9.6"><path d="M2.1 4.4 L4.3 6.6 L7.9 2.7" fill="none" stroke="#2ab79f" stroke-width="1.55"/></svg></i></div><div class="it" style="left:274.2px;top:1.1px"><span>收款流水</span><i class="cb"><svg width="9.5" height="9.6" viewBox="0 0 9.5 9.6"><path d="M2.1 4.4 L4.3 6.6 L7.9 2.7" fill="none" stroke="#2ab79f" stroke-width="1.55"/></svg></i></div><div class="it" style="left:336.6px;top:1.1px"><span>商品销售流水</span><i class="cb"><svg width="9.5" height="9.6" viewBox="0 0 9.5 9.6"><path d="M2.1 4.4 L4.3 6.6 L7.9 2.7" fill="none" stroke="#2ab79f" stroke-width="1.55"/></svg></i></div><div class="it" style="left:399px;top:1.1px"><span>商品销售汇总</span><i class="cb"><svg width="9.5" height="9.6" viewBox="0 0 9.5 9.6"><path d="M2.1 4.4 L4.3 6.6 L7.9 2.7" fill="none" stroke="#2ab79f" stroke-width="1.55"/></svg></i></div><div class="it" style="left:461.4px;top:1.1px"><span>交班记录</span><i class="cb"><svg width="9.5" height="9.6" viewBox="0 0 9.5 9.6"><path d="M2.1 4.4 L4.3 6.6 L7.9 2.7" fill="none" stroke="#2ab79f" stroke-width="1.55"/></svg></i></div><div class="it" style="left:149.4px;top:15.76px"><span>寄存报表</span><i class="cb"><svg width="9.5" height="9.6" viewBox="0 0 9.5 9.6"><path d="M2.1 4.4 L4.3 6.6 L7.9 2.7" fill="none" stroke="#2ab79f" stroke-width="1.55"/></svg></i></div><div class="it" style="left:211.8px;top:15.76px"><span>操作日志</span><i class="cb un"></i></div><div class="it" style="left:274.2px;top:15.76px"><span>跨店取货</span><i class="cb"><svg width="9.5" height="9.6" viewBox="0 0 9.5 9.6"><path d="M2.1 4.4 L4.3 6.6 L7.9 2.7" fill="none" stroke="#2ab79f" stroke-width="1.55"/></svg></i></div><div class="it" style="left:336.6px;top:15.76px"><span>异常支付</span><i class="cb"><svg width="9.5" height="9.6" viewBox="0 0 9.5 9.6"><path d="M2.1 4.4 L4.3 6.6 L7.9 2.7" fill="none" stroke="#2ab79f" stroke-width="1.55"/></svg></i></div><div class="it" style="left:399px;top:15.76px"><span>礼品卡销售</span><i class="cb"><svg width="9.5" height="9.6" viewBox="0 0 9.5 9.6"><path d="M2.1 4.4 L4.3 6.6 L7.9 2.7" fill="none" stroke="#2ab79f" stroke-width="1.55"/></svg></i></div></div>
<div class="grow" style="top:294px;height:58.5px"><div class="gl" style="top:24.95px"><b class="tl"></b><i class="gcb"></i><svg class="gi" width="7.5" height="7.5" viewBox="0 0 7.5 7.5"><rect x="0" y="0" width="3.3" height="3.3" rx=".7" fill="#14b6b0"/><rect x="4.2" y="0" width="3.3" height="3.3" rx=".7" fill="#14b6b0"/><rect x="0" y="4.2" width="3.3" height="3.3" rx=".7" fill="#14b6b0"/><rect x="4.2" y="4.2" width="3.3" height="3.3" rx=".7" fill="#14b6b0"/></svg><span>设置</span></div><div class="it" style="left:149.4px;top:1.1px"><span>菜单</span><i class="cb"><svg width="9.5" height="9.6" viewBox="0 0 9.5 9.6"><path d="M2.1 4.4 L4.3 6.6 L7.9 2.7" fill="none" stroke="#2ab79f" stroke-width="1.55"/></svg></i></div><div class="it" style="left:211.8px;top:1.1px"><span>外设</span><i class="cb"><svg width="9.5" height="9.6" viewBox="0 0 9.5 9.6"><path d="M2.1 4.4 L4.3 6.6 L7.9 2.7" fill="none" stroke="#2ab79f" stroke-width="1.55"/></svg></i></div><div class="it" style="left:274.2px;top:1.1px"><span>抹零</span><i class="cb"><svg width="9.5" height="9.6" viewBox="0 0 9.5 9.6"><path d="M2.1 4.4 L4.3 6.6 L7.9 2.7" fill="none" stroke="#2ab79f" stroke-width="1.55"/></svg></i></div><div class="it" style="left:336.6px;top:1.1px"><span>热键</span><i class="cb"><svg width="9.5" height="9.6" viewBox="0 0 9.5 9.6"><path d="M2.1 4.4 L4.3 6.6 L7.9 2.7" fill="none" stroke="#2ab79f" stroke-width="1.55"/></svg></i></div><div class="it" style="left:399px;top:1.1px"><span>打印机管理</span><i class="cb"><svg width="9.5" height="9.6" viewBox="0 0 9.5 9.6"><path d="M2.1 4.4 L4.3 6.6 L7.9 2.7" fill="none" stroke="#2ab79f" stroke-width="1.55"/></svg></i></div><div class="it" style="left:461.4px;top:1.1px"><span>收银模板</span><i class="cb"><svg width="9.5" height="9.6" viewBox="0 0 9.5 9.6"><path d="M2.1 4.4 L4.3 6.6 L7.9 2.7" fill="none" stroke="#2ab79f" stroke-width="1.55"/></svg></i></div><div class="it" style="left:149.4px;top:15.76px"><span>商品档案</span><i class="cb"><svg width="9.5" height="9.6" viewBox="0 0 9.5 9.6"><path d="M2.1 4.4 L4.3 6.6 L7.9 2.7" fill="none" stroke="#2ab79f" stroke-width="1.55"/></svg></i></div><div class="it" style="left:211.8px;top:15.76px"><span>清除数据</span><i class="cb un"></i></div><div class="it" style="left:274.2px;top:15.76px"><span>修改密码</span><i class="cb"><svg width="9.5" height="9.6" viewBox="0 0 9.5 9.6"><path d="M2.1 4.4 L4.3 6.6 L7.9 2.7" fill="none" stroke="#2ab79f" stroke-width="1.55"/></svg></i></div><div class="it" style="left:336.6px;top:15.76px"><span>移动支付</span><i class="cb un"></i></div><div class="it" style="left:399px;top:15.76px"><span>商场接口</span><i class="cb un"></i></div><div class="it" style="left:461.4px;top:15.76px"><span>条码秤</span><i class="cb"><svg width="9.5" height="9.6" viewBox="0 0 9.5 9.6"><path d="M2.1 4.4 L4.3 6.6 L7.9 2.7" fill="none" stroke="#2ab79f" stroke-width="1.55"/></svg></i></div><div class="it" style="left:149.4px;top:30.42px"><span>条码价签</span><i class="cb"><svg width="9.5" height="9.6" viewBox="0 0 9.5 9.6"><path d="M2.1 4.4 L4.3 6.6 L7.9 2.7" fill="none" stroke="#2ab79f" stroke-width="1.55"/></svg></i></div><div class="it" style="left:211.8px;top:30.42px"><span>包装签模板</span><i class="cb"><svg width="9.5" height="9.6" viewBox="0 0 9.5 9.6"><path d="M2.1 4.4 L4.3 6.6 L7.9 2.7" fill="none" stroke="#2ab79f" stroke-width="1.55"/></svg></i></div><div class="it" style="left:274.2px;top:30.42px"><span>界面设置</span><i class="cb"><svg width="9.5" height="9.6" viewBox="0 0 9.5 9.6"><path d="M2.1 4.4 L4.3 6.6 L7.9 2.7" fill="none" stroke="#2ab79f" stroke-width="1.55"/></svg></i></div><div class="it" style="left:336.6px;top:30.42px"><span>热卖商品</span><i class="cb"><svg width="9.5" height="9.6" viewBox="0 0 9.5 9.6"><path d="M2.1 4.4 L4.3 6.6 L7.9 2.7" fill="none" stroke="#2ab79f" stroke-width="1.55"/></svg></i></div><div class="it" style="left:399px;top:30.42px"><span>收银参数</span><i class="cb"><svg width="9.5" height="9.6" viewBox="0 0 9.5 9.6"><path d="M2.1 4.4 L4.3 6.6 L7.9 2.7" fill="none" stroke="#2ab79f" stroke-width="1.55"/></svg></i></div><div class="it" style="left:461.4px;top:30.42px"><span>数据下载</span><i class="cb"><svg width="9.5" height="9.6" viewBox="0 0 9.5 9.6"><path d="M2.1 4.4 L4.3 6.6 L7.9 2.7" fill="none" stroke="#2ab79f" stroke-width="1.55"/></svg></i></div><div class="it" style="left:149.4px;top:45.08px"><span>新品申请</span><i class="cb"><svg width="9.5" height="9.6" viewBox="0 0 9.5 9.6"><path d="M2.1 4.4 L4.3 6.6 L7.9 2.7" fill="none" stroke="#2ab79f" stroke-width="1.55"/></svg></i></div><div class="it" style="left:211.8px;top:45.08px"><span>商品调价</span><i class="cb"><svg width="9.5" height="9.6" viewBox="0 0 9.5 9.6"><path d="M2.1 4.4 L4.3 6.6 L7.9 2.7" fill="none" stroke="#2ab79f" stroke-width="1.55"/></svg></i></div></div>
<div class="grow" style="top:352.5px;height:59.15px"><div class="gl" style="top:25.27px"><b class="tl"></b><i class="gcb"></i><svg class="gi" width="7.5" height="7.5" viewBox="0 0 7.5 7.5"><rect x="0" y="0" width="3.3" height="3.3" rx=".7" fill="#14b6b0"/><rect x="4.2" y="0" width="3.3" height="3.3" rx=".7" fill="#14b6b0"/><rect x="0" y="4.2" width="3.3" height="3.3" rx=".7" fill="#14b6b0"/><rect x="4.2" y="4.2" width="3.3" height="3.3" rx=".7" fill="#14b6b0"/></svg><span>库存</span></div><div class="it" style="left:149.4px;top:1.1px"><span>要货单</span><i class="cb"><svg width="9.5" height="9.6" viewBox="0 0 9.5 9.6"><path d="M2.1 4.4 L4.3 6.6 L7.9 2.7" fill="none" stroke="#2ab79f" stroke-width="1.55"/></svg></i></div><div class="it" style="left:211.8px;top:1.1px"><span>总部直配收货</span><i class="cb"><svg width="9.5" height="9.6" viewBox="0 0 9.5 9.6"><path d="M2.1 4.4 L4.3 6.6 L7.9 2.7" fill="none" stroke="#2ab79f" stroke-width="1.55"/></svg></i></div><div class="it" style="left:274.2px;top:1.1px"><span>直配收货差异</span><i class="cb"><svg width="9.5" height="9.6" viewBox="0 0 9.5 9.6"><path d="M2.1 4.4 L4.3 6.6 L7.9 2.7" fill="none" stroke="#2ab79f" stroke-width="1.55"/></svg></i></div><div class="it" style="left:336.6px;top:1.1px"><span>商品调回总部</span><i class="cb"><svg width="9.5" height="9.6" viewBox="0 0 9.5 9.6"><path d="M2.1 4.4 L4.3 6.6 L7.9 2.7" fill="none" stroke="#2ab79f" stroke-width="1.55"/></svg></i></div><div class="it" style="left:399px;top:1.1px"><span>店间直调申请</span><i class="cb"><svg width="9.5" height="9.6" viewBox="0 0 9.5 9.6"><path d="M2.1 4.4 L4.3 6.6 L7.9 2.7" fill="none" stroke="#2ab79f" stroke-width="1.55"/></svg></i></div><div class="it" style="left:461.4px;top:1.1px"><span>店间直调发货</span><i class="cb"><svg width="9.5" height="9.6" viewBox="0 0 9.5 9.6"><path d="M2.1 4.4 L4.3 6.6 L7.9 2.7" fill="none" stroke="#2ab79f" stroke-width="1.55"/></svg></i></div><div class="it" style="left:149.4px;top:15.76px"><span>店间直调收货</span><i class="cb"><svg width="9.5" height="9.6" viewBox="0 0 9.5 9.6"><path d="M2.1 4.4 L4.3 6.6 L7.9 2.7" fill="none" stroke="#2ab79f" stroke-width="1.55"/></svg></i></div><div class="it" style="left:211.8px;top:15.76px"><span>店间直调差异</span><i class="cb"><svg width="9.5" height="9.6" viewBox="0 0 9.5 9.6"><path d="M2.1 4.4 L4.3 6.6 L7.9 2.7" fill="none" stroke="#2ab79f" stroke-width="1.55"/></svg></i></div><div class="it" style="left:274.2px;top:15.76px"><span>店间直调退货</span><i class="cb"><svg width="9.5" height="9.6" viewBox="0 0 9.5 9.6"><path d="M2.1 4.4 L4.3 6.6 L7.9 2.7" fill="none" stroke="#2ab79f" stroke-width="1.55"/></svg></i></div><div class="it" style="left:336.6px;top:15.76px"><span>盘点号申请</span><i class="cb"><svg width="9.5" height="9.6" viewBox="0 0 9.5 9.6"><path d="M2.1 4.4 L4.3 6.6 L7.9 2.7" fill="none" stroke="#2ab79f" stroke-width="1.55"/></svg></i></div><div class="it" style="left:399px;top:15.76px"><span>商品盘点单</span><i class="cb"><svg width="9.5" height="9.6" viewBox="0 0 9.5 9.6"><path d="M2.1 4.4 L4.3 6.6 L7.9 2.7" fill="none" stroke="#2ab79f" stroke-width="1.55"/></svg></i></div><div class="it" style="left:461.4px;top:15.76px"><span>盘点差异处理</span><i class="cb"><svg width="9.5" height="9.6" viewBox="0 0 9.5 9.6"><path d="M2.1 4.4 L4.3 6.6 L7.9 2.7" fill="none" stroke="#2ab79f" stroke-width="1.55"/></svg></i></div><div class="it" style="left:149.4px;top:30.42px"><span>要货汇总</span><i class="cb"><svg width="9.5" height="9.6" viewBox="0 0 9.5 9.6"><path d="M2.1 4.4 L4.3 6.6 L7.9 2.7" fill="none" stroke="#2ab79f" stroke-width="1.55"/></svg></i></div><div class="it" style="left:211.8px;top:30.42px"><span>配送明细</span><i class="cb"><svg width="9.5" height="9.6" viewBox="0 0 9.5 9.6"><path d="M2.1 4.4 L4.3 6.6 L7.9 2.7" fill="none" stroke="#2ab79f" stroke-width="1.55"/></svg></i></div><div class="it" style="left:274.2px;top:30.42px"><span>配送汇总</span><i class="cb"><svg width="9.5" height="9.6" viewBox="0 0 9.5 9.6"><path d="M2.1 4.4 L4.3 6.6 L7.9 2.7" fill="none" stroke="#2ab79f" stroke-width="1.55"/></svg></i></div><div class="it" style="left:336.6px;top:30.42px"><span>盘点明细</span><i class="cb"><svg width="9.5" height="9.6" viewBox="0 0 9.5 9.6"><path d="M2.1 4.4 L4.3 6.6 L7.9 2.7" fill="none" stroke="#2ab79f" stroke-width="1.55"/></svg></i></div><div class="it" style="left:399px;top:30.42px"><span>漏盘商品</span><i class="cb"><svg width="9.5" height="9.6" viewBox="0 0 9.5 9.6"><path d="M2.1 4.4 L4.3 6.6 L7.9 2.7" fill="none" stroke="#2ab79f" stroke-width="1.55"/></svg></i></div><div class="it" style="left:461.4px;top:30.42px"><span>盘点差异</span><i class="cb"><svg width="9.5" height="9.6" viewBox="0 0 9.5 9.6"><path d="M2.1 4.4 L4.3 6.6 L7.9 2.7" fill="none" stroke="#2ab79f" stroke-width="1.55"/></svg></i></div><div class="it" style="left:149.4px;top:45.08px"><span>库存查询</span><i class="cb"><svg width="9.5" height="9.6" viewBox="0 0 9.5 9.6"><path d="M2.1 4.4 L4.3 6.6 L7.9 2.7" fill="none" stroke="#2ab79f" stroke-width="1.55"/></svg></i></div><div class="it" style="left:211.8px;top:45.08px"><span>出入库明细</span><i class="cb"><svg width="9.5" height="9.6" viewBox="0 0 9.5 9.6"><path d="M2.1 4.4 L4.3 6.6 L7.9 2.7" fill="none" stroke="#2ab79f" stroke-width="1.55"/></svg></i></div><div class="it" style="left:274.2px;top:45.08px"><span>出入库汇总</span><i class="cb"><svg width="9.5" height="9.6" viewBox="0 0 9.5 9.6"><path d="M2.1 4.4 L4.3 6.6 L7.9 2.7" fill="none" stroke="#2ab79f" stroke-width="1.55"/></svg></i></div><div class="it" style="left:336.6px;top:45.08px"><span>其他出库</span><i class="cb"><svg width="9.5" height="9.6" viewBox="0 0 9.5 9.6"><path d="M2.1 4.4 L4.3 6.6 L7.9 2.7" fill="none" stroke="#2ab79f" stroke-width="1.55"/></svg></i></div><div class="it" style="left:399px;top:45.08px"><span>其他入库</span><i class="cb"><svg width="9.5" height="9.6" viewBox="0 0 9.5 9.6"><path d="M2.1 4.4 L4.3 6.6 L7.9 2.7" fill="none" stroke="#2ab79f" stroke-width="1.55"/></svg></i></div><div class="it" style="left:461.4px;top:45.08px"><span>商品调回申请</span><i class="cb"><svg width="9.5" height="9.6" viewBox="0 0 9.5 9.6"><path d="M2.1 4.4 L4.3 6.6 L7.9 2.7" fill="none" stroke="#2ab79f" stroke-width="1.55"/></svg></i></div><div class="it" style="left:523.8px;top:45.08px"><span>店间退货申请</span><i class="cb"><svg width="9.5" height="9.6" viewBox="0 0 9.5 9.6"><path d="M2.1 4.4 L4.3 6.6 L7.9 2.7" fill="none" stroke="#2ab79f" stroke-width="1.55"/></svg></i></div></div>
<div class="grow" style="top:411.65px;height:14.95px"><div class="gl" style="top:3.17px"><b class="tl"></b><i class="gcb"></i><svg class="gi" width="7.5" height="7.5" viewBox="0 0 7.5 7.5"><rect x="0" y="0" width="3.3" height="3.3" rx=".7" fill="#14b6b0"/><rect x="4.2" y="0" width="3.3" height="3.3" rx=".7" fill="#14b6b0"/><rect x="0" y="4.2" width="3.3" height="3.3" rx=".7" fill="#14b6b0"/><rect x="4.2" y="4.2" width="3.3" height="3.3" rx=".7" fill="#14b6b0"/></svg><span>外卖</span></div><div class="it" style="left:149.4px;top:1.1px"><span>外卖订单</span><i class="cb"><svg width="9.5" height="9.6" viewBox="0 0 9.5 9.6"><path d="M2.1 4.4 L4.3 6.6 L7.9 2.7" fill="none" stroke="#2ab79f" stroke-width="1.55"/></svg></i></div><div class="it" style="left:211.8px;top:1.1px"><span>外卖管理</span><i class="cb"><svg width="9.5" height="9.6" viewBox="0 0 9.5 9.6"><path d="M2.1 4.4 L4.3 6.6 L7.9 2.7" fill="none" stroke="#2ab79f" stroke-width="1.55"/></svg></i></div></div>
<div class="grow" style="top:426.6px;height:44.3px"><div class="gl" style="top:17.85px"><b class="tl"></b><i class="gcb"></i><svg class="gi" width="7.5" height="7.5" viewBox="0 0 7.5 7.5"><rect x="0" y="0" width="3.3" height="3.3" rx=".7" fill="#14b6b0"/><rect x="4.2" y="0" width="3.3" height="3.3" rx=".7" fill="#14b6b0"/><rect x="0" y="4.2" width="3.3" height="3.3" rx=".7" fill="#14b6b0"/><rect x="4.2" y="4.2" width="3.3" height="3.3" rx=".7" fill="#14b6b0"/></svg><span>采购</span></div><div class="it" style="left:149.4px;top:1.1px"><span>采购订单</span><i class="cb"><svg width="9.5" height="9.6" viewBox="0 0 9.5 9.6"><path d="M2.1 4.4 L4.3 6.6 L7.9 2.7" fill="none" stroke="#2ab79f" stroke-width="1.55"/></svg></i></div><div class="it" style="left:211.8px;top:1.1px"><span>采购入库</span><i class="cb"><svg width="9.5" height="9.6" viewBox="0 0 9.5 9.6"><path d="M2.1 4.4 L4.3 6.6 L7.9 2.7" fill="none" stroke="#2ab79f" stroke-width="1.55"/></svg></i></div><div class="it" style="left:274.2px;top:1.1px"><span>采购退货</span><i class="cb"><svg width="9.5" height="9.6" viewBox="0 0 9.5 9.6"><path d="M2.1 4.4 L4.3 6.6 L7.9 2.7" fill="none" stroke="#2ab79f" stroke-width="1.55"/></svg></i></div><div class="it" style="left:336.6px;top:1.1px"><span>促销进价单</span><i class="cb"><svg width="9.5" height="9.6" viewBox="0 0 9.5 9.6"><path d="M2.1 4.4 L4.3 6.6 L7.9 2.7" fill="none" stroke="#2ab79f" stroke-width="1.55"/></svg></i></div><div class="it" style="left:399px;top:1.1px"><span>联营账款单</span><i class="cb"><svg width="9.5" height="9.6" viewBox="0 0 9.5 9.6"><path d="M2.1 4.4 L4.3 6.6 L7.9 2.7" fill="none" stroke="#2ab79f" stroke-width="1.55"/></svg></i></div><div class="it" style="left:461.4px;top:1.1px"><span>代销账款单</span><i class="cb"><svg width="9.5" height="9.6" viewBox="0 0 9.5 9.6"><path d="M2.1 4.4 L4.3 6.6 L7.9 2.7" fill="none" stroke="#2ab79f" stroke-width="1.55"/></svg></i></div><div class="it" style="left:149.4px;top:15.76px"><span>扣率代销账款单</span><i class="cb"><svg width="9.5" height="9.6" viewBox="0 0 9.5 9.6"><path d="M2.1 4.4 L4.3 6.6 L7.9 2.7" fill="none" stroke="#2ab79f" stroke-width="1.55"/></svg></i></div><div class="it" style="left:211.8px;top:15.76px"><span>供应商费用单</span><i class="cb"><svg width="9.5" height="9.6" viewBox="0 0 9.5 9.6"><path d="M2.1 4.4 L4.3 6.6 L7.9 2.7" fill="none" stroke="#2ab79f" stroke-width="1.55"/></svg></i></div><div class="it" style="left:274.2px;top:15.76px"><span>供应商预付款单</span><i class="cb"><svg width="9.5" height="9.6" viewBox="0 0 9.5 9.6"><path d="M2.1 4.4 L4.3 6.6 L7.9 2.7" fill="none" stroke="#2ab79f" stroke-width="1.55"/></svg></i></div><div class="it" style="left:336.6px;top:15.76px"><span>供应商结算单</span><i class="cb"><svg width="9.5" height="9.6" viewBox="0 0 9.5 9.6"><path d="M2.1 4.4 L4.3 6.6 L7.9 2.7" fill="none" stroke="#2ab79f" stroke-width="1.55"/></svg></i></div><div class="it" style="left:399px;top:15.76px"><span>供应商往来账</span><i class="cb"><svg width="9.5" height="9.6" viewBox="0 0 9.5 9.6"><path d="M2.1 4.4 L4.3 6.6 L7.9 2.7" fill="none" stroke="#2ab79f" stroke-width="1.55"/></svg></i></div><div class="it" style="left:461.4px;top:15.76px"><span>促销补差单</span><i class="cb"><svg width="9.5" height="9.6" viewBox="0 0 9.5 9.6"><path d="M2.1 4.4 L4.3 6.6 L7.9 2.7" fill="none" stroke="#2ab79f" stroke-width="1.55"/></svg></i></div><div class="it" style="left:149.4px;top:30.42px"><span>采购明细</span><i class="cb"><svg width="9.5" height="9.6" viewBox="0 0 9.5 9.6"><path d="M2.1 4.4 L4.3 6.6 L7.9 2.7" fill="none" stroke="#2ab79f" stroke-width="1.55"/></svg></i></div><div class="it" style="left:211.8px;top:30.42px"><span>采购汇总</span><i class="cb"><svg width="9.5" height="9.6" viewBox="0 0 9.5 9.6"><path d="M2.1 4.4 L4.3 6.6 L7.9 2.7" fill="none" stroke="#2ab79f" stroke-width="1.55"/></svg></i></div><div class="it" style="left:274.2px;top:30.42px"><span>联营销售查询</span><i class="cb"><svg width="9.5" height="9.6" viewBox="0 0 9.5 9.6"><path d="M2.1 4.4 L4.3 6.6 L7.9 2.7" fill="none" stroke="#2ab79f" stroke-width="1.55"/></svg></i></div><div class="it" style="left:336.6px;top:30.42px"><span>代销销售查询</span><i class="cb"><svg width="9.5" height="9.6" viewBox="0 0 9.5 9.6"><path d="M2.1 4.4 L4.3 6.6 L7.9 2.7" fill="none" stroke="#2ab79f" stroke-width="1.55"/></svg></i></div><div class="it" style="left:399px;top:30.42px"><span>扣率代销销售查询</span><i class="cb"><svg width="9.5" height="9.6" viewBox="0 0 9.5 9.6"><path d="M2.1 4.4 L4.3 6.6 L7.9 2.7" fill="none" stroke="#2ab79f" stroke-width="1.55"/></svg></i></div></div>
<div class="grow" style="top:470.9px;height:15px"><div class="gl" style="top:3.2px"><b class="tl"></b><i class="gcb"></i><svg class="gi" width="7.5" height="7.5" viewBox="0 0 7.5 7.5"><rect x="0" y="0" width="3.3" height="3.3" rx=".7" fill="#14b6b0"/><rect x="4.2" y="0" width="3.3" height="3.3" rx=".7" fill="#14b6b0"/><rect x="0" y="4.2" width="3.3" height="3.3" rx=".7" fill="#14b6b0"/><rect x="4.2" y="4.2" width="3.3" height="3.3" rx=".7" fill="#14b6b0"/></svg><span>促销</span></div><div class="it" style="left:149.4px;top:1.1px"><span>促销档期</span><i class="cb"><svg width="9.5" height="9.6" viewBox="0 0 9.5 9.6"><path d="M2.1 4.4 L4.3 6.6 L7.9 2.7" fill="none" stroke="#2ab79f" stroke-width="1.55"/></svg></i></div><div class="it" style="left:211.8px;top:1.1px"><span>促销方案</span><i class="cb"><svg width="9.5" height="9.6" viewBox="0 0 9.5 9.6"><path d="M2.1 4.4 L4.3 6.6 L7.9 2.7" fill="none" stroke="#2ab79f" stroke-width="1.55"/></svg></i></div><div class="it" style="left:274.2px;top:1.1px"><span>促销查询</span><i class="cb"><svg width="9.5" height="9.6" viewBox="0 0 9.5 9.6"><path d="M2.1 4.4 L4.3 6.6 L7.9 2.7" fill="none" stroke="#2ab79f" stroke-width="1.55"/></svg></i></div></div>
<div class="grow" style="top:485.9px;height:30.2px"><div class="gl" style="top:10.8px"><b class="tl last"></b><i class="gcb"></i><svg class="gi" width="7.5" height="7.5" viewBox="0 0 7.5 7.5"><rect x="0" y="0" width="3.3" height="3.3" rx=".7" fill="#14b6b0"/><rect x="4.2" y="0" width="3.3" height="3.3" rx=".7" fill="#14b6b0"/><rect x="0" y="4.2" width="3.3" height="3.3" rx=".7" fill="#14b6b0"/><rect x="4.2" y="4.2" width="3.3" height="3.3" rx=".7" fill="#14b6b0"/></svg><span>预约</span></div><div class="it" style="left:149.4px;top:1.1px"><span>技师管理</span><i class="cb un"></i></div><div class="it" style="left:211.8px;top:1.1px"><span>班次管理</span><i class="cb un"></i></div><div class="it" style="left:274.2px;top:1.1px"><span>排班管理</span><i class="cb un"></i></div><div class="it" style="left:336.6px;top:1.1px"><span>预约记录</span><i class="cb un"></i></div><div class="it" style="left:399px;top:1.1px"><span>新建预约</span><i class="cb un"></i></div><div class="it" style="left:461.4px;top:1.1px"><span>取消预约</span><i class="cb un"></i></div><div class="it" style="left:149.4px;top:15.76px"><span>预约服务</span><i class="cb un"></i></div><div class="it" style="left:211.8px;top:15.76px"><span>预约叫号</span><i class="cb un"></i></div><div class="it" style="left:274.2px;top:15.76px"><span>预约过号</span><i class="cb un"></i></div></div>
</div>
</body></html>
